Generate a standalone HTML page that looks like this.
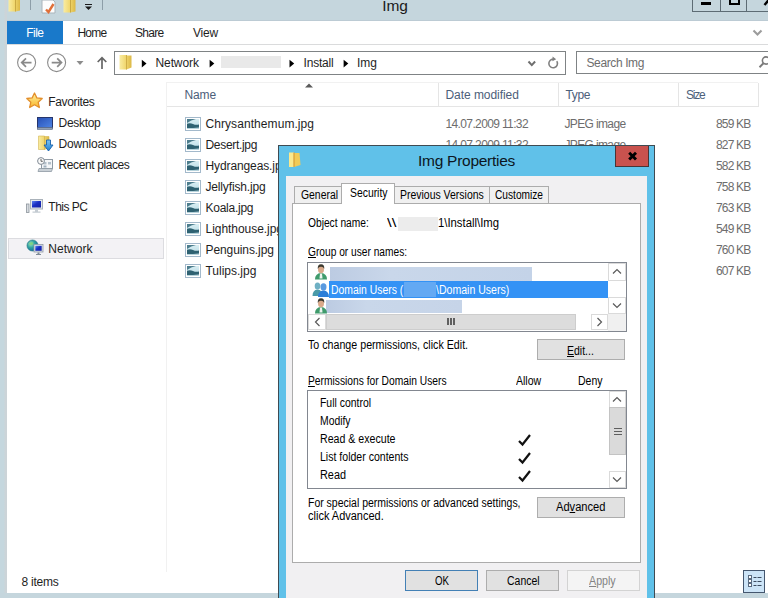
<!DOCTYPE html>
<html><head><meta charset="utf-8"><title>Img</title>
<style>
html,body{margin:0;padding:0;}
body{width:768px;height:598px;overflow:hidden;position:relative;background:#fff;font-family:"Liberation Sans",sans-serif;font-size:12px;color:#000;}
.a{position:absolute;box-sizing:border-box;}
.t{position:absolute;white-space:nowrap;transform-origin:0 0;}
.ex{font-size:12px;color:#1e1e1e;}
.dl{font-size:12px;color:#000;}
svg{position:absolute;overflow:visible;}
.btn{position:absolute;box-sizing:border-box;border:1px solid #adadad;background:#e1e1e1;}
</style></head><body>
<!-- Explorer window frame -->
<div class="a" style="left:0;top:0;width:768px;height:21px;background:#c5d6dd;border-bottom:1px solid #bccbd4;"></div>
<div class="a" style="left:0;top:0;width:7px;height:598px;background:linear-gradient(90deg,#c5d7de 0,#c5d7de 4px,#ccd4d8 5px,#ccd4d8 7px);"></div>
<div class="a" style="left:0;top:593px;width:768px;height:5px;background:#c5d6dd;"></div>

<!-- quick access toolbar icons (cropped at top) -->
<svg style="left:0;top:0" width="110" height="21" viewBox="0 0 110 21">
 <defs>
  <linearGradient id="fy" x1="0" y1="0" x2="1" y2="0"><stop offset="0" stop-color="#f9eca2"/><stop offset="0.55" stop-color="#f0d66c"/><stop offset="1" stop-color="#dcb846"/></linearGradient>
 </defs>
 <path d="M8.5 0h7v11.5h-7zM15.5 0h4.5v10.5l-4.5 1z" fill="url(#fy)"/>
 <path d="M15.5 0v11.5" stroke="#c9a944" stroke-width="1"/>
 <rect x="30" y="0" width="1" height="10" fill="#8d9ea8"/>
 <path d="M42 0h11l2 2v11h-13z" fill="#fdfdfd" stroke="#a9b4bb" stroke-width="1"/>
 <path d="M46 9.5l2.5 2.5l5-8" fill="none" stroke="#e0703a" stroke-width="2.4"/>
 <path d="M63.5 0h7v12.5h-7zM70.500 0h5v11.5l-5 1z" fill="url(#fy)"/>
 <path d="M70.500 0v12.500" stroke="#c9a944" stroke-width="1"/>
 <rect x="85" y="4" width="7" height="1" fill="#1a1a1a"/>
 <path d="M85 6.500h7l-3.500 3.500z" fill="#1a1a1a"/>
 <rect x="102" y="0" width="1" height="10" fill="#8d9ea8"/>
</svg>

<!-- caption buttons -->
<div class="a" style="left:692px;top:-1px;width:80px;height:13px;border:1px solid #5d6c74;"></div>
<div class="a" style="left:720px;top:0;width:1px;height:12px;background:#5d6c74;"></div>
<div class="a" style="left:746px;top:0;width:1px;height:12px;background:#5d6c74;"></div>
<div class="a" style="left:701px;top:2px;width:10px;height:3px;background:#000;"></div>
<div class="a" style="left:729px;top:-6px;width:11px;height:11px;border:2px solid #000;"></div>
<svg style="left:760px;top:0" width="8" height="8"><path d="M4.500 5l5-6" stroke="#000" stroke-width="2.400"/></svg>

<!-- ribbon -->
<div class="a" style="left:7px;top:21px;width:56px;height:23px;background:#1979ca;"></div>
<div class="a" style="left:7px;top:44px;width:761px;height:1px;background:#dadbdc;"></div>
<svg style="left:752px;top:29px" width="12" height="8"><path d="M1.500 1.500l4 4l4-4" fill="none" stroke="#9c9c9c" stroke-width="2.100"/></svg>

<!-- nav buttons -->
<svg style="left:14px;top:50px" width="100" height="26" viewBox="14 50 100 26">
 <circle cx="26.600" cy="62.600" r="9" fill="none" stroke="#8a8a8a" stroke-width="1.100"/>
 <path d="M31.500 62.600h-9.500M26 58.300l-4.300 4.300l4.300 4.300" fill="none" stroke="#8a8a8a" stroke-width="1.700"/>
 <circle cx="56.600" cy="62.600" r="9" fill="none" stroke="#8a8a8a" stroke-width="1.100"/>
 <path d="M51.700 62.600h9.500M57.200 58.300l4.300 4.300l-4.300 4.300" fill="none" stroke="#8a8a8a" stroke-width="1.700"/>
 <path d="M76.500 61h7l-3.500 4z" fill="#8c8c8c"/>
 <path d="M102 69v-11M97.700 62l4.300-4.300l4.300 4.300" fill="none" stroke="#666" stroke-width="1.700"/>
</svg>

<!-- address bar -->
<div class="a" style="left:114px;top:51px;width:452px;height:24px;border:1px solid #7f8385;background:#fff;"></div>
<svg style="left:118px;top:53px" width="16" height="18" viewBox="118 53 16 18">
 <path d="M119.500 55h7v14.500h-7zM126.500 55.500h5v12l-5 2z" fill="url(#fy)"/>
 <path d="M126.500 55v14.500" stroke="#cfae48" stroke-width="1"/>
</svg>
<svg style="left:140px;top:58px" width="220" height="12" viewBox="140 58 220 12">
 <path d="M141.800 59.800v7.600l4.700-3.800z"/>
 <path d="M209.600 59.800v7.600l4.700-3.800z"/>
 <path d="M289.500 59.800v7.600l4.700-3.800z"/>
 <path d="M343.600 59.800v7.600l4.700-3.800z"/>
</svg>
<div class="a" style="left:221px;top:56px;width:60px;height:12px;background:#e9e9e9;"></div>
<svg style="left:526px;top:56px" width="36" height="16" viewBox="526 56 36 16">
 <path d="M528.500 61.500l3.300 3.600l3.300-3.600" fill="none" stroke="#6e6e6e" stroke-width="2"/>
 <path d="M556.800 61.200a4.300 4.300 0 1 1-3.200-2" fill="none" stroke="#808080" stroke-width="1.600"/>
 <path d="M552.600 56.500l3.600 2.800l-3.800 2z" fill="#808080"/>
</svg>
<div class="a" style="left:576px;top:51px;width:200px;height:23px;border:1px solid #7f8385;background:#fff;"></div>
<svg style="left:754px;top:56px" width="14" height="16" viewBox="754 56 14 16"><circle cx="766" cy="60.500" r="3.600" fill="none" stroke="#7a7a7a" stroke-width="1.600"/><path d="M763.500 63.200l-4 4" stroke="#7a7a7a" stroke-width="2"/></svg>

<!-- nav pane -->
<div class="a" style="left:166px;top:82px;width:1px;height:490px;background:#f1f1f1;"></div>
<div class="a" style="left:8px;top:238px;width:156px;height:21px;background:#f3f2f5;border:1px solid #dcdce0;"></div>

<!-- header -->
<div class="a" style="left:167px;top:82px;width:591px;height:1px;background:#f1f1f1;"></div>
<div class="a" style="left:167px;top:106px;width:592px;height:1px;background:#e5e5e5;"></div>
<div class="a" style="left:438px;top:83px;width:1px;height:23px;background:#e5e5e5;"></div>
<div class="a" style="left:558px;top:83px;width:1px;height:23px;background:#e5e5e5;"></div>
<div class="a" style="left:678px;top:83px;width:1px;height:23px;background:#e5e5e5;"></div>
<div class="a" style="left:758px;top:83px;width:1px;height:23px;background:#e5e5e5;"></div>
<svg style="left:304px;top:83px" width="10" height="5"><path d="M1 4.500h8l-4-4z" fill="#5a5a5a"/></svg>

<!-- status bar view buttons -->
<div class="a" style="left:743px;top:570px;width:22px;height:23px;background:#cce4f7;border:1px solid #44566e;"></div>
<svg style="left:747px;top:575px" width="16" height="14"><g fill="#fff" stroke="#5a6b80" stroke-width="1"><rect x="1.500" y="0.500" width="3" height="3"/><rect x="1.500" y="4.500" width="3" height="3"/><rect x="1.500" y="8.500" width="3" height="3"/></g><path d="M6.500 2.500h3M10.500 2.500h4M6.500 6.500h3M10.500 6.500h4M6.500 10.500h3M10.500 10.500h4" stroke="#3d4c60" stroke-width="1"/></svg>

<!-- nav pane icons -->
<svg style="left:26px;top:92px" width="18" height="17" viewBox="0 0 18 17">
 <defs><linearGradient id="st" x1="0" y1="0" x2="0" y2="1"><stop offset="0" stop-color="#fff3a0"/><stop offset="1" stop-color="#f9b52a"/></linearGradient></defs>
 <path d="M8.500 1l2.300 4.900l5.400 0.600l-4 3.700l1.100 5.300l-4.800-2.700l-4.800 2.700l1.100-5.300l-4-3.700l5.400-0.600z" fill="url(#st)" stroke="#e38f2c" stroke-width="1.300" stroke-linejoin="round"/>
</svg>
<svg style="left:37px;top:117px" width="16" height="13" viewBox="0 0 16 13">
 <defs><linearGradient id="dk" x1="0" y1="0" x2="1" y2="1"><stop offset="0" stop-color="#274fb5"/><stop offset="1" stop-color="#4f86e6"/></linearGradient></defs>
 <rect x="0.500" y="0.500" width="15" height="10.500" fill="url(#dk)" stroke="#26356b"/>
 <rect x="0.500" y="10.500" width="15" height="2" fill="#8f9fb4" stroke="#566580" stroke-width="0.600"/>
</svg>
<svg style="left:38px;top:135px" width="16" height="17" viewBox="0 0 16 17">
 <defs><linearGradient id="ar" x1="0" y1="0" x2="0" y2="1"><stop offset="0" stop-color="#7cc4f2"/><stop offset="1" stop-color="#1f7fd0"/></linearGradient></defs>
 <path d="M0.500 1h6v13.500h-6zM6.500 1.500h4.500v11l-4.500 2z" fill="url(#fy)" stroke="#d4b552" stroke-width="0.600"/>
 <path d="M8.500 5h4v5h2.500l-4.500 6l-4.500-6h2.500z" fill="url(#ar)" stroke="#1a62ad" stroke-width="0.900"/>
</svg>
<svg style="left:37px;top:157px" width="16" height="15" viewBox="0 0 16 15">
 <rect x="4.500" y="2.500" width="11" height="9" fill="#f4f6f8" stroke="#8e99a3"/>
 <rect x="6.500" y="5" width="3" height="2.500" fill="#b4c0ca"/><rect x="11" y="5" width="3" height="2.500" fill="#b4c0ca"/><rect x="6.500" y="8.500" width="3" height="2" fill="#9fb0bd"/>
 <circle cx="4" cy="4" r="3.400" fill="#fafafa" stroke="#808a94"/>
 <path d="M4 2v2.300h1.800" fill="none" stroke="#555" stroke-width="0.900"/>
 <path d="M2 11.500h13.500l-1 3h-13.500z" fill="#c9d0d6" stroke="#8e99a3" stroke-width="0.800"/>
</svg>
<svg style="left:26px;top:199px" width="18" height="15" viewBox="0 0 18 15">
 <defs><linearGradient id="sc" x1="0" y1="0" x2="1" y2="1"><stop offset="0" stop-color="#5d86f0"/><stop offset="0.450" stop-color="#1a2fc4"/><stop offset="1" stop-color="#1522a0"/></linearGradient></defs>
 <rect x="0.500" y="5" width="2.500" height="8.500" fill="#d9dde2" stroke="#8b939b" stroke-width="0.800"/>
 <rect x="4.500" y="0.500" width="12" height="9.500" fill="#e4e8ec" stroke="#aab2ba"/>
 <rect x="6" y="2" width="9" height="6.500" fill="url(#sc)"/>
 <path d="M9 10.500h3v2h2.500v1.300h-8v-1.300h2.500z" fill="#c4cbd2"/>
</svg>
<svg style="left:26px;top:239px" width="18" height="17" viewBox="0 0 18 17">
 <defs><radialGradient id="gl" cx="0.350" cy="0.350" r="0.700"><stop offset="0" stop-color="#9fe0c0"/><stop offset="0.500" stop-color="#2fa3a0"/><stop offset="1" stop-color="#176a9c"/></radialGradient></defs>
 <circle cx="6.500" cy="6.500" r="5.500" fill="url(#gl)" stroke="#2a7a8a" stroke-width="0.700"/>
 <path d="M3 4.500q2-2 4-1q1 1.500-1 2.500q-2 0.500-3-1.500z" fill="#7fd47a" opacity="0.850"/>
 <rect x="8" y="5.500" width="9" height="7.500" fill="#dfe4ea" stroke="#8e98a6" stroke-width="0.800"/>
 <rect x="9.300" y="6.800" width="6.400" height="5" fill="url(#sc)"/>
 <path d="M11.500 13.500h2v1.500h1.500v1h-5v-1h1.500z" fill="#7f8a96"/>
</svg>

<!-- file icons -->
<svg width="0" height="0" style="left:0;top:0"><defs><linearGradient id="ph" x1="0" y1="0" x2="0" y2="1"><stop offset="0" stop-color="#d9eef3"/><stop offset="0.600" stop-color="#c4e2ea"/><stop offset="1" stop-color="#a9c9d3"/></linearGradient></defs></svg>
<svg style="left:185px;top:117px" width="16" height="14" viewBox="0 0 16 14"><rect x="0.500" y="0.500" width="15" height="13" fill="#fff" stroke="#a3b9cb"/><rect x="2" y="2" width="12" height="10" fill="url(#ph)"/><path d="M2 2h9q-5 1-9 4z" fill="#4d7d8d"/><path d="M2 6.800q3-1.200 6 0.200t6 0.500v3q-3 0.300-6 0.500h-6z" fill="#2f6272"/><rect x="2" y="11" width="12" height="1" fill="#b7d3db"/></svg>
<svg style="left:185px;top:138px" width="16" height="14" viewBox="0 0 16 14"><rect x="0.500" y="0.500" width="15" height="13" fill="#fff" stroke="#a3b9cb"/><rect x="2" y="2" width="12" height="10" fill="url(#ph)"/><path d="M2 2h9q-5 1-9 4z" fill="#4d7d8d"/><path d="M2 6.800q3-1.200 6 0.200t6 0.500v3q-3 0.300-6 0.500h-6z" fill="#2f6272"/><rect x="2" y="11" width="12" height="1" fill="#b7d3db"/></svg>
<svg style="left:185px;top:159px" width="16" height="14" viewBox="0 0 16 14"><rect x="0.500" y="0.500" width="15" height="13" fill="#fff" stroke="#a3b9cb"/><rect x="2" y="2" width="12" height="10" fill="url(#ph)"/><path d="M2 2h9q-5 1-9 4z" fill="#4d7d8d"/><path d="M2 6.800q3-1.200 6 0.200t6 0.500v3q-3 0.300-6 0.500h-6z" fill="#2f6272"/><rect x="2" y="11" width="12" height="1" fill="#b7d3db"/></svg>
<svg style="left:185px;top:180px" width="16" height="14" viewBox="0 0 16 14"><rect x="0.500" y="0.500" width="15" height="13" fill="#fff" stroke="#a3b9cb"/><rect x="2" y="2" width="12" height="10" fill="url(#ph)"/><path d="M2 2h9q-5 1-9 4z" fill="#4d7d8d"/><path d="M2 6.800q3-1.200 6 0.200t6 0.500v3q-3 0.300-6 0.500h-6z" fill="#2f6272"/><rect x="2" y="11" width="12" height="1" fill="#b7d3db"/></svg>
<svg style="left:185px;top:201px" width="16" height="14" viewBox="0 0 16 14"><rect x="0.500" y="0.500" width="15" height="13" fill="#fff" stroke="#a3b9cb"/><rect x="2" y="2" width="12" height="10" fill="url(#ph)"/><path d="M2 2h9q-5 1-9 4z" fill="#4d7d8d"/><path d="M2 6.800q3-1.200 6 0.200t6 0.500v3q-3 0.300-6 0.500h-6z" fill="#2f6272"/><rect x="2" y="11" width="12" height="1" fill="#b7d3db"/></svg>
<svg style="left:185px;top:222px" width="16" height="14" viewBox="0 0 16 14"><rect x="0.500" y="0.500" width="15" height="13" fill="#fff" stroke="#a3b9cb"/><rect x="2" y="2" width="12" height="10" fill="url(#ph)"/><path d="M2 2h9q-5 1-9 4z" fill="#4d7d8d"/><path d="M2 6.800q3-1.200 6 0.200t6 0.500v3q-3 0.300-6 0.500h-6z" fill="#2f6272"/><rect x="2" y="11" width="12" height="1" fill="#b7d3db"/></svg>
<svg style="left:185px;top:243px" width="16" height="14" viewBox="0 0 16 14"><rect x="0.500" y="0.500" width="15" height="13" fill="#fff" stroke="#a3b9cb"/><rect x="2" y="2" width="12" height="10" fill="url(#ph)"/><path d="M2 2h9q-5 1-9 4z" fill="#4d7d8d"/><path d="M2 6.800q3-1.200 6 0.200t6 0.500v3q-3 0.300-6 0.500h-6z" fill="#2f6272"/><rect x="2" y="11" width="12" height="1" fill="#b7d3db"/></svg>
<svg style="left:185px;top:264px" width="16" height="14" viewBox="0 0 16 14"><rect x="0.500" y="0.500" width="15" height="13" fill="#fff" stroke="#a3b9cb"/><rect x="2" y="2" width="12" height="10" fill="url(#ph)"/><path d="M2 2h9q-5 1-9 4z" fill="#4d7d8d"/><path d="M2 6.800q3-1.200 6 0.200t6 0.500v3q-3 0.300-6 0.500h-6z" fill="#2f6272"/><rect x="2" y="11" width="12" height="1" fill="#b7d3db"/></svg>

<!-- explorer texts -->
<div class="t ex" id="t0" style="left:382.3px;top:-3px;line-height:17px;font-size:15.5px;color:#1a1a1a;letter-spacing:-0.11px;">Img</div>
<div class="t ex" id="t1" style="left:26.3px;top:26px;line-height:14px;color:#fff;letter-spacing:-0.54px;">File</div>
<div class="t ex" id="t2" style="left:77.5px;top:26px;line-height:14px;letter-spacing:-0.80px;">Home</div>
<div class="t ex" id="t3" style="left:135.0px;top:26px;line-height:14px;letter-spacing:-0.71px;">Share</div>
<div class="t ex" id="t4" style="left:193.0px;top:26px;line-height:14px;letter-spacing:-0.20px;">View</div>
<div class="t ex" id="t5" style="left:155.5px;top:56px;line-height:14px;letter-spacing:-0.10px;">Network</div>
<div class="t ex" id="t6" style="left:303.5px;top:56px;line-height:14px;letter-spacing:-0.19px;">Install</div>
<div class="t ex" id="t7" style="left:357.0px;top:56px;line-height:14px;letter-spacing:-0.01px;">Img</div>
<div class="t ex" id="t8" style="left:586.5px;top:56px;line-height:14px;color:#6d6d6d;letter-spacing:-0.39px;">Search Img</div>
<div class="t ex" id="t9" style="left:48.3px;top:95px;line-height:14px;letter-spacing:-0.35px;">Favorites</div>
<div class="t ex" id="t10" style="left:58.5px;top:116px;line-height:14px;letter-spacing:-0.29px;">Desktop</div>
<div class="t ex" id="t11" style="left:58.5px;top:137px;line-height:14px;letter-spacing:-0.15px;">Downloads</div>
<div class="t ex" id="t12" style="left:58.5px;top:158px;line-height:14px;letter-spacing:-0.39px;">Recent places</div>
<div class="t ex" id="t13" style="left:48.3px;top:200px;line-height:14px;letter-spacing:-0.50px;">This PC</div>
<div class="t ex" id="t14" style="left:48.3px;top:242px;line-height:14px;letter-spacing:0.04px;">Network</div>
<div class="t ex" id="t15" style="left:184.5px;top:88px;line-height:14px;color:#4c607a;letter-spacing:-0.13px;">Name</div>
<div class="t ex" id="t16" style="left:445.5px;top:88px;line-height:14px;color:#4c607a;letter-spacing:-0.06px;">Date modified</div>
<div class="t ex" id="t17" style="left:565.5px;top:88px;line-height:14px;color:#4c607a;letter-spacing:-0.38px;">Type</div>
<div class="t ex" id="t18" style="left:686.0px;top:88px;line-height:14px;color:#4c607a;letter-spacing:-1.21px;">Size</div>
<div class="t ex" id="t19" style="left:21.5px;top:575px;line-height:14px;letter-spacing:-0.23px;">8 items</div>
<div class="t ex" id="t20" style="left:205.5px;top:117px;line-height:14px;letter-spacing:0.07px;">Chrysanthemum.jpg</div>
<div class="t ex" id="t21" style="left:445.5px;top:117px;line-height:14px;color:#6d6d6d;letter-spacing:-0.63px;">14.07.2009 11:32</div>
<div class="t ex" id="t22" style="left:564.5px;top:117px;line-height:14px;color:#6d6d6d;letter-spacing:-0.64px;">JPEG image</div>
<div class="t ex" id="t23" style="left:716.0px;top:117px;line-height:14px;color:#6d6d6d;letter-spacing:-0.81px;">859 KB</div>
<div class="t ex" id="t24" style="left:205.5px;top:138px;line-height:14px;letter-spacing:-0.32px;">Desert.jpg</div>
<div class="t ex" id="t25" style="left:445.5px;top:138px;line-height:14px;color:#6d6d6d;letter-spacing:-0.63px;">14.07.2009 11:32</div>
<div class="t ex" id="t26" style="left:564.5px;top:138px;line-height:14px;color:#6d6d6d;letter-spacing:-0.64px;">JPEG image</div>
<div class="t ex" id="t27" style="left:716.0px;top:138px;line-height:14px;color:#6d6d6d;letter-spacing:-0.81px;">827 KB</div>
<div class="t ex" id="t28" style="left:205.5px;top:159px;line-height:14px;letter-spacing:-0.11px;">Hydrangeas.jpg</div>
<div class="t ex" id="t29" style="left:445.5px;top:159px;line-height:14px;color:#6d6d6d;letter-spacing:-0.63px;">14.07.2009 11:32</div>
<div class="t ex" id="t30" style="left:564.5px;top:159px;line-height:14px;color:#6d6d6d;letter-spacing:-0.64px;">JPEG image</div>
<div class="t ex" id="t31" style="left:716.0px;top:159px;line-height:14px;color:#6d6d6d;letter-spacing:-0.81px;">582 KB</div>
<div class="t ex" id="t32" style="left:205.5px;top:180px;line-height:14px;letter-spacing:-0.16px;">Jellyfish.jpg</div>
<div class="t ex" id="t33" style="left:445.5px;top:180px;line-height:14px;color:#6d6d6d;letter-spacing:-0.63px;">14.07.2009 11:32</div>
<div class="t ex" id="t34" style="left:564.5px;top:180px;line-height:14px;color:#6d6d6d;letter-spacing:-0.64px;">JPEG image</div>
<div class="t ex" id="t35" style="left:716.0px;top:180px;line-height:14px;color:#6d6d6d;letter-spacing:-0.81px;">758 KB</div>
<div class="t ex" id="t36" style="left:205.5px;top:201px;line-height:14px;letter-spacing:-0.25px;">Koala.jpg</div>
<div class="t ex" id="t37" style="left:445.5px;top:201px;line-height:14px;color:#6d6d6d;letter-spacing:-0.63px;">14.07.2009 11:32</div>
<div class="t ex" id="t38" style="left:564.5px;top:201px;line-height:14px;color:#6d6d6d;letter-spacing:-0.64px;">JPEG image</div>
<div class="t ex" id="t39" style="left:716.0px;top:201px;line-height:14px;color:#6d6d6d;letter-spacing:-0.81px;">763 KB</div>
<div class="t ex" id="t40" style="left:205.5px;top:222px;line-height:14px;letter-spacing:-0.04px;">Lighthouse.jpg</div>
<div class="t ex" id="t41" style="left:445.5px;top:222px;line-height:14px;color:#6d6d6d;letter-spacing:-0.63px;">14.07.2009 11:32</div>
<div class="t ex" id="t42" style="left:564.5px;top:222px;line-height:14px;color:#6d6d6d;letter-spacing:-0.64px;">JPEG image</div>
<div class="t ex" id="t43" style="left:716.0px;top:222px;line-height:14px;color:#6d6d6d;letter-spacing:-0.81px;">549 KB</div>
<div class="t ex" id="t44" style="left:205.5px;top:243px;line-height:14px;letter-spacing:-0.09px;">Penguins.jpg</div>
<div class="t ex" id="t45" style="left:445.5px;top:243px;line-height:14px;color:#6d6d6d;letter-spacing:-0.63px;">14.07.2009 11:32</div>
<div class="t ex" id="t46" style="left:564.5px;top:243px;line-height:14px;color:#6d6d6d;letter-spacing:-0.64px;">JPEG image</div>
<div class="t ex" id="t47" style="left:716.0px;top:243px;line-height:14px;color:#6d6d6d;letter-spacing:-0.81px;">760 KB</div>
<div class="t ex" id="t48" style="left:205.5px;top:264px;line-height:14px;letter-spacing:-0.01px;">Tulips.jpg</div>
<div class="t ex" id="t49" style="left:445.5px;top:264px;line-height:14px;color:#6d6d6d;letter-spacing:-0.63px;">14.07.2009 11:32</div>
<div class="t ex" id="t50" style="left:564.5px;top:264px;line-height:14px;color:#6d6d6d;letter-spacing:-0.64px;">JPEG image</div>
<div class="t ex" id="t51" style="left:716.0px;top:264px;line-height:14px;color:#6d6d6d;letter-spacing:-0.81px;">607 KB</div>

<!-- ===== Properties dialog ===== -->
<div class="a" style="left:278px;top:145px;width:377px;height:460px;background:#60c1e9;border:1px solid #3f4b52;"></div>
<div class="a" style="left:286px;top:176px;width:361px;height:425px;background:#f1f0f2;"></div>
<svg style="left:288px;top:152px" width="14" height="16" viewBox="0 0 14 16">
 <path d="M1 0.500h5v14.500h-5z" fill="#fae98e"/><path d="M6 1h5.500l1 12l-6.500 2z" fill="#f1cb58"/>
 <path d="M6 0.500v14.500" stroke="#d89c34" stroke-width="1.200"/>
</svg>
<div class="a" style="left:615px;top:146px;width:34px;height:21px;background:#c9524e;border:1px solid #4a3436;border-top:none;"></div>
<svg style="left:628px;top:152px" width="10" height="9" viewBox="0 0 10 9"><path d="M1.200 0.700l6.800 6.800M8 0.700l-6.800 6.800" stroke="#000" stroke-width="2.900"/></svg>

<!-- tab control -->
<div class="a" style="left:292px;top:203px;width:349px;height:360px;background:#fff;border:1px solid #acacac;"></div>
<div class="a" style="left:294px;top:186px;width:48px;height:18px;background:#f0f0f0;border:1px solid #acacac;"></div>
<div class="a" style="left:394px;top:186px;width:96px;height:18px;background:#f0f0f0;border:1px solid #acacac;"></div>
<div class="a" style="left:489px;top:186px;width:60px;height:18px;background:#f0f0f0;border:1px solid #acacac;"></div>
<div class="a" style="left:341px;top:183px;width:54px;height:21px;background:#fff;border:1px solid #acacac;border-bottom:none;"></div>

<div class="a" style="left:398px;top:217px;width:40px;height:14px;background:#ececec;"></div>

<!-- group list -->
<div class="a" style="left:307px;top:262px;width:320px;height:70px;background:#fff;border:1px solid #828790;"></div>
<div class="a" style="left:330px;top:267px;width:202px;height:14px;background:linear-gradient(90deg,#bccbe2,#c9d7ea 30%,#c4d3e8);"></div>
<div class="a" style="left:329px;top:281px;width:279px;height:17px;background:#3392f5;"></div>
<div class="a" style="left:404px;top:282px;width:32px;height:15px;background:#63a9f3;"></div>
<div class="a" style="left:326px;top:300px;width:136px;height:13px;background:linear-gradient(90deg,#bccbe2,#c9d7ea 30%,#c6d4e8);"></div>
<!-- vertical scrollbar -->
<div class="a" style="left:608px;top:263px;width:18px;height:51px;background:#fff;"></div>
<div class="a" style="left:608px;top:263px;width:18px;height:18px;background:#fff;border:1px solid #dadada;"></div>
<div class="a" style="left:608px;top:297px;width:18px;height:17px;background:#fff;border:1px solid #dadada;"></div>
<svg style="left:612px;top:268px" width="10" height="7"><path d="M1 5.500l4-4l4 4" fill="none" stroke="#5a5a5a" stroke-width="1.200"/></svg>
<svg style="left:612px;top:302px" width="10" height="7"><path d="M1 1.500l4 4l4-4" fill="none" stroke="#5a5a5a" stroke-width="1.200"/></svg>
<!-- horizontal scrollbar -->
<div class="a" style="left:308px;top:314px;width:300px;height:16px;background:#fff;"></div>
<div class="a" style="left:308px;top:314px;width:18px;height:16px;background:#fff;border:1px solid #dadada;"></div>
<div class="a" style="left:591px;top:314px;width:17px;height:16px;background:#fff;border:1px solid #dadada;"></div>
<div class="a" style="left:326px;top:314px;width:250px;height:16px;background:#dcdcdc;border:1px solid #cdcdcd;"></div>
<svg style="left:314px;top:317px" width="7" height="10"><path d="M5.500 1l-4 4l4 4" fill="none" stroke="#5a5a5a" stroke-width="1.200"/></svg>
<svg style="left:596px;top:317px" width="7" height="10"><path d="M1.500 1l4 4l-4 4" fill="none" stroke="#5a5a5a" stroke-width="1.200"/></svg>
<div class="a" style="left:447px;top:318px;width:2px;height:7px;background:#606060;"></div>
<div class="a" style="left:450px;top:318px;width:2px;height:7px;background:#606060;"></div>
<div class="a" style="left:453px;top:318px;width:2px;height:7px;background:#606060;"></div>
<div class="a" style="left:608px;top:314px;width:18px;height:17px;background:#f0f0f0;"></div>

<!-- user icons -->
<svg style="left:314px;top:264px" width="14" height="16" viewBox="0 0 14 16">
 <path d="M1 15.500q0-6 6-6.500q6 0.500 6 6.500z" fill="#3f9b6c"/><path d="M6 9.500h2l0.500 5h-3z" fill="#eef4f0"/>
 <ellipse cx="7" cy="5.500" rx="3" ry="3.800" fill="#d9a98a"/><path d="M3.800 5q-0.500-4.500 3.200-4.700q3.800 0.200 3.200 4.700q-1-2.500-3.200-2.300q-2.200-0.200-3.200 2.300z" fill="#3c3a30"/>
</svg>
<svg style="left:312px;top:281px" width="18" height="16" viewBox="0 0 18 16">
 <path d="M0.500 15q0-6 5-6.500q5 0.500 5 6.500z" fill="#4a9aa8"/><ellipse cx="5.500" cy="5" rx="2.800" ry="3.500" fill="#6fb0c4"/>
 <path d="M6 16q0-6 5.500-6.500q5.500 0.500 5.500 6.500z" fill="#2d7fd8"/><ellipse cx="11.500" cy="6" rx="3" ry="3.700" fill="#5a9ae0"/>
</svg>
<svg style="left:314px;top:298px" width="14" height="16" viewBox="0 0 14 16">
 <path d="M1 15.500q0-6 6-6.500q6 0.500 6 6.500z" fill="#3f9b6c"/><path d="M6 9.500h2l0.500 5h-3z" fill="#eef4f0"/>
 <ellipse cx="7" cy="5.500" rx="3" ry="3.800" fill="#d9a98a"/><path d="M3.800 5q-0.500-4.500 3.200-4.700q3.800 0.200 3.200 4.700q-1-2.500-3.200-2.300q-2.200-0.200-3.200 2.300z" fill="#3c3a30"/>
</svg>

<div class="btn" style="left:537px;top:339px;width:88px;height:21px;"></div>

<!-- permissions list -->
<div class="a" style="left:307px;top:390px;width:320px;height:99px;background:#fff;border:1px solid #828790;"></div>
<div class="a" style="left:609px;top:391px;width:17px;height:17px;background:#fff;border:1px solid #dadada;"></div>
<div class="a" style="left:609px;top:407px;width:17px;height:48px;background:#dadada;border:1px solid #c3c3c3;"></div>
<div class="a" style="left:609px;top:471px;width:17px;height:17px;background:#fff;border:1px solid #dadada;"></div>
<svg style="left:612px;top:396px" width="10" height="7"><path d="M1 5.500l4-4l4 4" fill="none" stroke="#5a5a5a" stroke-width="1.200"/></svg>
<svg style="left:612px;top:476px" width="10" height="7"><path d="M1 1.500l4 4l4-4" fill="none" stroke="#5a5a5a" stroke-width="1.200"/></svg>
<div class="a" style="left:614px;top:428px;width:8px;height:1px;background:#5e5e5e;box-shadow:0 3px 0 #5e5e5e,0 6px 0 #5e5e5e;"></div>
<svg style="left:517px;top:434px" width="15" height="48" viewBox="0 0 15 48">
 <path d="M2 7l3.500 3.500l7.500-9.500" fill="none" stroke="#111" stroke-width="2.200"/>
 <path d="M2 25l3.500 3.500l7.500-9.500" fill="none" stroke="#111" stroke-width="2.200"/>
 <path d="M2 43l3.500 3.500l7.500-9.500" fill="none" stroke="#111" stroke-width="2.200"/>
</svg>

<div class="btn" style="left:537px;top:497px;width:88px;height:21px;"></div>
<div class="btn" style="left:405px;top:570px;width:73px;height:21px;border-color:#4380b5;"></div>
<div class="btn" style="left:486px;top:570px;width:73px;height:21px;"></div>
<div class="btn" style="left:567px;top:570px;width:73px;height:21px;background:#f4f4f4;border-color:#d3d3d3;"></div>

<!-- dialog texts -->
<div class="t ex" id="t52" style="left:418.0px;top:152px;line-height:17px;font-size:15.5px;color:#0c1622;letter-spacing:-0.27px;">Img Properties</div>
<div class="t dl" id="t53" style="left:300.5px;top:188px;line-height:14px;transform:scaleX(0.866);">General</div>
<div class="t dl" id="t54" style="left:349.5px;top:186px;line-height:14px;transform:scaleX(0.865);">Security</div>
<div class="t dl" id="t55" style="left:399.5px;top:188px;line-height:14px;transform:scaleX(0.872);">Previous Versions</div>
<div class="t dl" id="t56" style="left:495.3px;top:188px;line-height:14px;transform:scaleX(0.847);">Customize</div>
<div class="t dl" id="t57" style="left:307.7px;top:216px;line-height:14px;transform:scaleX(0.852);">Object name:</div>
<div class="t dl" id="t58" style="left:387.0px;top:216px;line-height:14px;transform:scaleX(1.394);">\\</div>
<div class="t dl" id="t59" style="left:438.0px;top:216px;line-height:14px;transform:scaleX(0.943);">1\Install\Img</div>
<div class="t dl" id="t60" style="left:307.5px;top:245px;line-height:14px;transform:scaleX(0.849);"><u>G</u>roup or user names:</div>
<div class="t dl" id="t61" style="left:331.3px;top:283px;line-height:14px;color:#fff;transform:scaleX(0.866);">Domain Users (</div>
<div class="t dl" id="t62" style="left:436.3px;top:283px;line-height:14px;color:#fff;transform:scaleX(0.879);">\Domain Users)</div>
<div class="t dl" id="t63" style="left:307.5px;top:338px;line-height:14px;transform:scaleX(0.889);">To change permissions, click Edit.</div>
<div class="t dl" id="t64" style="left:567.0px;top:344px;line-height:14px;transform:scaleX(0.873);"><u>E</u>dit...</div>
<div class="t dl" id="t65" style="left:307.5px;top:374px;line-height:14px;transform:scaleX(0.855);"><u>P</u>ermissions for Domain Users</div>
<div class="t dl" id="t66" style="left:515.8px;top:374px;line-height:14px;transform:scaleX(0.878);">Allow</div>
<div class="t dl" id="t67" style="left:577.5px;top:374px;line-height:14px;transform:scaleX(0.875);">Deny</div>
<div class="t dl" id="t68" style="left:319.5px;top:396px;line-height:14px;transform:scaleX(0.869);">Full control</div>
<div class="t dl" id="t69" style="left:319.5px;top:414px;line-height:14px;transform:scaleX(0.863);">Modify</div>
<div class="t dl" id="t70" style="left:319.5px;top:432px;line-height:14px;transform:scaleX(0.884);">Read &amp; execute</div>
<div class="t dl" id="t71" style="left:319.5px;top:450px;line-height:14px;transform:scaleX(0.879);">List folder contents</div>
<div class="t dl" id="t72" style="left:319.5px;top:468px;line-height:14px;transform:scaleX(0.906);">Read</div>
<div class="t dl" id="t73" style="left:307.5px;top:496px;line-height:14px;transform:scaleX(0.873);">For special permissions or advanced settings,</div>
<div class="t dl" id="t74" style="left:307.5px;top:509px;line-height:14px;transform:scaleX(0.916);">click Advanced.</div>
<div class="t dl" id="t75" style="left:555.5px;top:500px;line-height:14px;transform:scaleX(0.927);">Ad<u>v</u>anced</div>
<div class="t dl" id="t76" style="left:435.0px;top:574px;line-height:14px;transform:scaleX(0.807);">OK</div>
<div class="t dl" id="t77" style="left:506.7px;top:574px;line-height:14px;transform:scaleX(0.873);">Cancel</div>
<div class="t dl" id="t78" style="left:589.3px;top:574px;line-height:14px;color:#838383;transform:scaleX(0.889);"><u>A</u>pply</div>
</body></html>
